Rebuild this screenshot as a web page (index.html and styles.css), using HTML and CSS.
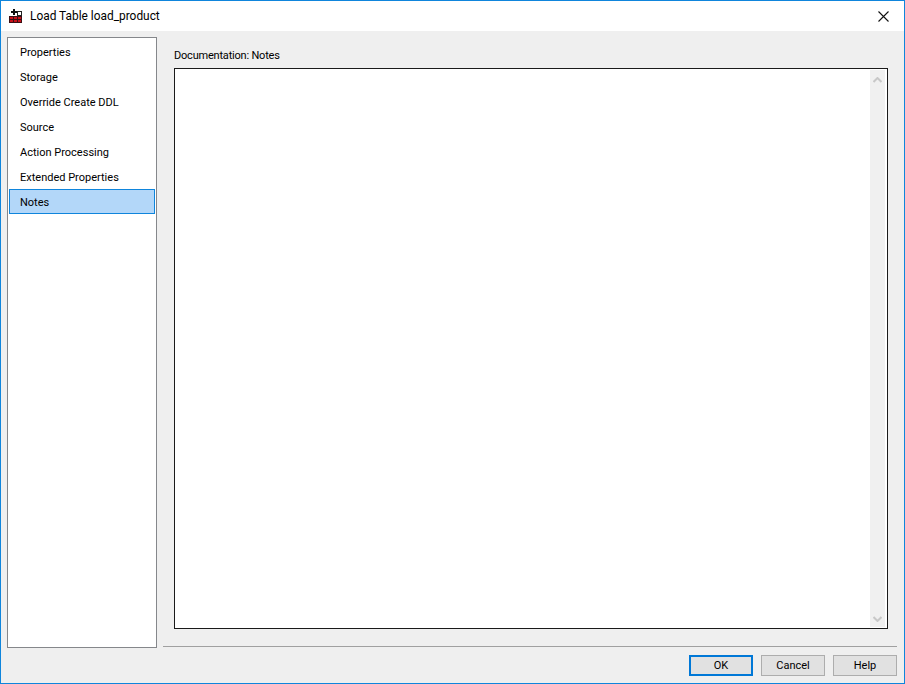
FILE: index.html
```html
<!DOCTYPE html>
<html lang="en">
<head>
<meta charset="utf-8">
<title>Load Table load_product</title>
<link rel="stylesheet" href="styles.css">
</head>
<body>
<div class="window">
  <header class="titlebar">
    <svg class="app-icon" width="16" height="16" viewBox="0 0 16 16" shape-rendering="crispEdges">
      <rect x="1" y="8" width="13" height="7" fill="#c8101a"/>
      <path d="M1 8.5h13M1 11.5h13M1 14.5h13M1.5 8v7M5.5 8v7M9.5 8v7M13.5 8v7" stroke="#3a1014" fill="none"/>
      <rect x="9.5" y="3.5" width="4" height="4" fill="#fff" stroke="#222"/>
      <path d="M5 1h2v2h2v2H7v2H5V5H3V3h2z" fill="#111"/>
    </svg>
    <span class="title">Load Table load_product</span>
    <svg class="close" width="11" height="11" viewBox="0 0 11 11">
      <path d="M.5.5l10 10M10.5.5l-10 10" stroke="#111" stroke-width="1.1" fill="none"/>
    </svg>
  </header>
  <div class="body">
    <div class="main">
      <nav class="nav">
        <div class="nav-item">Properties</div>
        <div class="nav-item">Storage</div>
        <div class="nav-item">Override Create DDL</div>
        <div class="nav-item">Source</div>
        <div class="nav-item">Action Processing</div>
        <div class="nav-item">Extended Properties</div>
        <div class="nav-item is-selected">Notes</div>
      </nav>
      <section class="content">
        <div class="doc-label">Documentation: Notes</div>
        <div class="editor">
          <div class="editor-text"></div>
          <div class="scrollbar">
            <svg width="9" height="6" viewBox="0 0 9 6"><path d="M.5 5L4.5 1l4 4" stroke="#c8c8c8" stroke-width="2" fill="none"/></svg>
            <svg width="9" height="6" viewBox="0 0 9 6"><path d="M.5 1l4 4 4-4" stroke="#c8c8c8" stroke-width="2" fill="none"/></svg>
          </div>
        </div>
        <div class="separator"></div>
        <div class="buttons">
          <button class="btn is-default" type="button">OK</button>
          <button class="btn" type="button">Cancel</button>
          <button class="btn" type="button">Help</button>
        </div>
      </section>
    </div>
  </div>
</div>
</body>
</html>
```
FILE: styles.css
```css
* { box-sizing: border-box; }
html, body { margin: 0; padding: 0; }
body {
  width: 905px;
  height: 684px;
  font-family: Roboto, "Open Sans", sans-serif;
  font-size: 11px;
  color: #000;
  overflow: hidden;
}
.window {
  width: 905px;
  height: 684px;
  border: 1px solid #0f85dc;
  border-top-width: 0;
  display: flex;
  flex-direction: column;
  background: #efefef;
}
.titlebar {
  height: 31px;
  flex: none;
  background: #fff;
  display: flex;
  align-items: center;
  padding: 0 15px 1px 7px;
  border-top: 1px solid #0f85dc;
}
.app-icon { flex: none; }
.title { margin-left: 6px; font-size: 11.9px; flex: 1; }
.close { flex: none; margin-top: 1px; }
.body { flex: 1; padding: 6px 7px 7px 6px; }
.main { display: flex; height: 100%; }
.nav {
  width: 150px;
  height: 611px;
  flex: none;
  background: #fff;
  border: 1px solid #85878b;
  padding: 1px 1px 0;
}
.nav-item {
  height: 25px;
  line-height: 25px;
  padding-left: 11px;
}
.nav-item:first-child { margin-top: 1px; }
.is-selected {
  background: #b3d7f9;
  border: 1px solid #0f85dc;
  line-height: 25px;
  margin-top: -1px;
  padding-left: 10px;
}
.content {
  flex: 1;
  display: flex;
  flex-direction: column;
  padding-left: 6px;
}
.doc-label { height: 31px; padding: 11px 0 0 11px; line-height: 15px; letter-spacing: -.2px; }
.editor {
  width: 714px;
  height: 561px;
  margin-left: 11px;
  flex: none;
  background: #fff;
  border: 1px solid #1a1a1a;
  display: flex;
}
.editor-text { flex: 1; }
.scrollbar {
  width: 15px;
  margin: 1px 2px 1px 0;
  background: #f0f0f0;
  display: flex;
  flex-direction: column;
  justify-content: space-between;
  align-items: center;
  padding: 7px 0 5px;
}
.separator {
  height: 1px;
  background: #a0a0a0;
  margin-top: 17px;
}
.buttons {
  display: flex;
  justify-content: flex-end;
  gap: 8px;
  margin-top: 8px;
}
.btn {
  width: 64px;
  height: 21px;
  background: #e1e1e1;
  border: 1px solid #adadad;
  font: inherit;
  padding: 0;
  color: #000;
}
.is-default { border: 2px solid #0078d7; }
```
